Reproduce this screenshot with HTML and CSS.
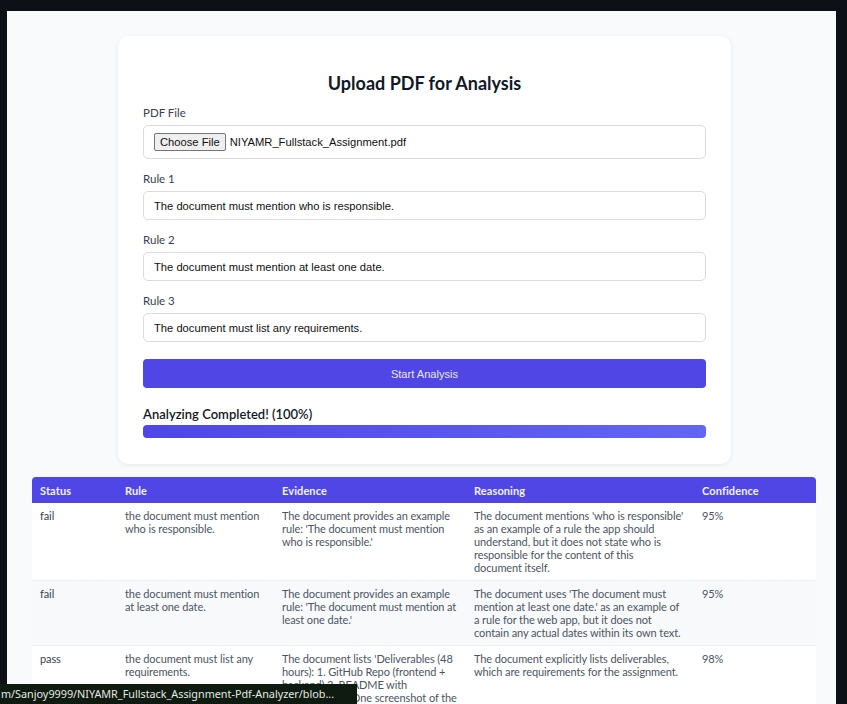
FILE: index.html
```html
<!DOCTYPE html>
<html lang="en">
<head>
<meta charset="utf-8">
<title>Upload PDF for Analysis</title>
<link rel="stylesheet" href="styles.css">
</head>
<body>
<div class="page">
  <section class="card">
    <h1 class="title">Upload PDF for Analysis</h1>
    <div class="field">
      <label class="label">PDF File</label>
      <div class="file-box">
        <button class="file-btn" type="button">Choose File</button>
        <span class="file-name">NIYAMR_Fullstack_Assignment.pdf</span>
      </div>
    </div>
    <div class="field">
      <label class="label">Rule 1</label>
      <input class="text-input" type="text" value="The document must mention who is responsible.">
    </div>
    <div class="field">
      <label class="label">Rule 2</label>
      <input class="text-input" type="text" value="The document must mention at least one date.">
    </div>
    <div class="field">
      <label class="label">Rule 3</label>
      <input class="text-input" type="text" value="The document must list any requirements.">
    </div>
    <button class="start-btn" type="button">Start Analysis</button>
    <div class="progress">
      <div class="progress-label">Analyzing Completed! (100%)</div>
      <div class="progress-track"><div class="progress-fill"></div></div>
    </div>
  </section>

  <table class="results">
    <colgroup>
      <col class="c-status"><col class="c-rule"><col class="c-evidence"><col class="c-reason"><col class="c-conf">
    </colgroup>
    <thead>
      <tr><th>Status</th><th>Rule</th><th>Evidence</th><th>Reasoning</th><th>Confidence</th></tr>
    </thead>
    <tbody>
      <tr>
        <td class="status">fail</td>
        <td>the document must mention who is responsible.</td>
        <td>The document provides an example rule: 'The document must mention who is responsible.'</td>
        <td>The document mentions 'who is responsible' as an example of a rule the app should understand, but it does not state who is responsible for the content of this document&nbsp;itself.</td>
        <td>95%</td>
      </tr>
      <tr class="alt">
        <td class="status">fail</td>
        <td>the document must mention at least one date.</td>
        <td>The document provides an example rule: 'The document must mention at least one date.'</td>
        <td>The document uses 'The document must mention at least one date.' as an example of a rule for the web app, but it does not contain any actual dates within its own text.</td>
        <td>95%</td>
      </tr>
      <tr>
        <td class="status">pass</td>
        <td>the document must list any requirements.</td>
        <td>The document lists 'Deliverables (48 hours): 1. GitHub Repo (frontend + backend) 2. README with instructions 3. One screenshot of the working UI.'</td>
        <td>The document explicitly lists deliverables, which are requirements for the assignment.</td>
        <td>98%</td>
      </tr>
    </tbody>
  </table>
</div>
<div class="status-bar">m/Sanjoy9999/NIYAMR_Fullstack_Assignment-Pdf-Analyzer/blob...</div>
</body>
</html>
```
FILE: styles.css
```css
* { box-sizing: border-box; }

html, body {
  margin: 0;
  padding: 0;
  background: #0d1117;
}

body {
  padding: 11px 11px 0 7px;
  font-family: Lato, "Noto Sans", sans-serif;
  color: #1f2937;
}

.page {
  background: #f8fafc;
  min-height: 693px;
  padding: 25px 0 40px 0;
}

.card {
  width: 613px;
  margin-left: 111px;
  background: #ffffff;
  border-radius: 10px;
  box-shadow: 0 1px 4px rgba(15, 23, 42, 0.08);
  padding: 32px 25px 26px 25px;
  display: flex;
  flex-direction: column;
}

.title {
  margin: 0 0 7px 0;
  text-align: center;
  font-size: 18px;
  line-height: 30px;
  font-weight: 700;
  color: #111827;
}

.field {
  display: flex;
  flex-direction: column;
  gap: 4px;
  margin-bottom: 12px;
}

.label {
  font-size: 11.5px;
  line-height: 16px;
  color: #374151;
}

.file-box {
  height: 34px;
  border: 1px solid #d9dce1;
  border-radius: 5px;
  display: flex;
  align-items: center;
  padding: 0 10px;
  gap: 4px;
  font-family: "Liberation Sans", Arial, sans-serif;
  font-size: 11.2px;
  color: #111;
}

.file-btn {
  font-family: "Liberation Sans", Arial, sans-serif;
  font-size: 11.2px;
  height: 18px;
  padding: 0 5px;
  background: #efefef;
  border: 1px solid #767676;
  border-radius: 2px;
  color: #111;
  line-height: 16px;
}

.text-input {
  height: 29px;
  border: 1px solid #d9dce1;
  border-radius: 5px;
  padding: 0 10px;
  font-family: "Liberation Sans", Arial, sans-serif;
  font-size: 11.2px;
  color: #111;
  background: #fff;
  outline: none;
}

.start-btn {
  margin-top: 5px;
  height: 29px;
  border: none;
  border-radius: 4px;
  background: #4f46e5;
  color: #e9e8ff;
  font-family: "Liberation Sans", Arial, sans-serif;
  font-size: 11.1px;
}

.progress {
  margin-top: 17px;
  display: flex;
  flex-direction: column;
  gap: 2px;
}

.progress-label {
  font-size: 13px;
  line-height: 18px;
  font-weight: 600;
  color: #111827;
}

.progress-track {
  height: 13px;
  border-radius: 4px;
  background: #e5e7eb;
  overflow: hidden;
}

.progress-fill {
  width: 100%;
  height: 100%;
  background: linear-gradient(90deg, #4f46e5, #6366f1);
}

.results {
  margin: 13px 0 0 25px;
  width: 784px;
  border-collapse: separate;
  border-spacing: 0;
  table-layout: fixed;
  background: #fff;
  font-size: 11px;
  line-height: 13px;
  letter-spacing: -0.1px;
  color: #4b5563;
}

.c-status { width: 85px; }
.c-rule { width: 157px; }
.c-evidence { width: 192px; }
.c-reason { width: 228px; }
.c-conf { width: 122px; }

.results th {
  background: #4f46e5;
  color: #f3f2ff;
  text-align: left;
  font-weight: 700;
  height: 26px;
  padding: 0 8px;
  font-size: 11px;
  letter-spacing: 0.1px;
}

.results th:first-child { border-top-left-radius: 4px; }
.results th:last-child { border-top-right-radius: 4px; }

.results td {
  vertical-align: top;
  padding: 6px 8px 6px 8px;
  border-bottom: 1px solid #eef0f3;
}

.results tr.alt td { background: #f8f9fb; }

.results td.status { color: #374151; }

.status-bar {
  position: fixed;
  left: 0;
  bottom: 0;
  height: 20px;
  width: 357px;
  padding: 0 0 0 1px;
  background: #0f1a10;
  color: #e4e9e4;
  font-family: "Noto Sans", sans-serif;
  font-size: 10.8px;
  line-height: 20px;
  white-space: nowrap;
  overflow: hidden;
}
```
